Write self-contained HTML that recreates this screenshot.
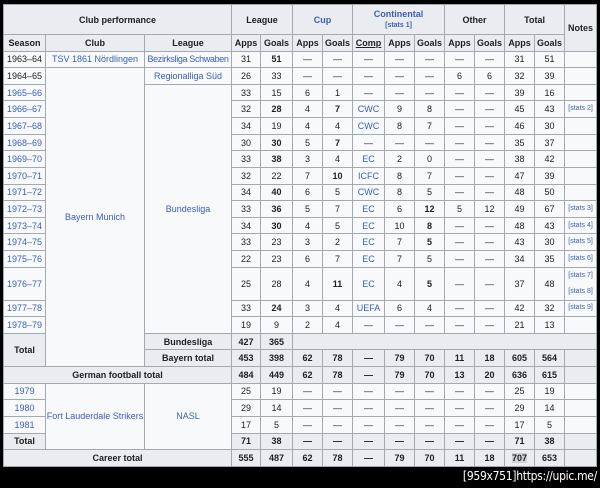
<!DOCTYPE html>
<html><head><meta charset="utf-8"><style>
html,body{margin:0;padding:0;background:#000;width:600px;height:488px;overflow:hidden}
table{position:absolute;left:3px;top:4px;width:593px;height:463px;border-collapse:collapse;table-layout:fixed;background:#f8f9fa;font-family:"Liberation Sans","DejaVu Sans",sans-serif;font-size:9px;color:#202122}
td,th{border:1px solid #a2a9b1;text-align:center;padding:0;line-height:10px;overflow:hidden;white-space:nowrap}
th{background:#eaecf0;font-weight:bold}
tr{height:16.6px}
a,.l{color:#3a5fb8}
.s{font-size:7px;color:#3a5fb8}
.h1{height:30px}
.d{height:33px}
.g{background:#d0d2d6}
abbr{text-decoration:underline;text-decoration-style:solid}
</style></head><body>
<table>
<colgroup><col style="width:42px"><col style="width:99px"><col style="width:87px"><col style="width:29px"><col style="width:32px"><col style="width:30px"><col style="width:30px"><col style="width:32px"><col style="width:30px"><col style="width:30px"><col style="width:30px"><col style="width:30px"><col style="width:30px"><col style="width:30px"><col style="width:32px"></colgroup>
<tr class="h1"><th colspan="3">Club performance</th><th colspan="2">League</th><th colspan="2" class="l">Cup</th><th colspan="3"><span class="l">Continental</span><br><span class="s">[stats 1]</span></th><th colspan="2">Other</th><th colspan="2">Total</th><th rowspan="2">Notes</th></tr>
<tr><th>Season</th><th>Club</th><th>League</th><th>Apps</th><th>Goals</th><th>Apps</th><th>Goals</th><th><abbr>Comp</abbr></th><th>Apps</th><th>Goals</th><th>Apps</th><th>Goals</th><th>Apps</th><th>Goals</th></tr>
<tr><td>1963–64</td><td class="l">TSV 1861 Nördlingen</td><td class="l" style="letter-spacing:-0.35px">Bezirksliga Schwaben</td><td>31</td><td><b>51</b></td><td>—</td><td>—</td><td>—</td><td>—</td><td>—</td><td>—</td><td>—</td><td>31</td><td>51</td><td></td></tr>
<tr><td>1964–65</td><td rowspan="17" class="l">Bayern Munich</td><td class="l">Regionalliga Süd</td><td>26</td><td>33</td><td>—</td><td>—</td><td>—</td><td>—</td><td>—</td><td>6</td><td>6</td><td>32</td><td>39</td><td></td></tr>
<tr><td class="l">1965–66</td><td rowspan="14" class="l">Bundesliga</td><td>33</td><td>15</td><td>6</td><td>1</td><td>—</td><td>—</td><td>—</td><td>—</td><td>—</td><td>39</td><td>16</td><td></td></tr>
<tr><td class="l">1966–67</td><td>32</td><td><b>28</b></td><td>4</td><td><b>7</b></td><td class="l">CWC</td><td>9</td><td>8</td><td>—</td><td>—</td><td>45</td><td>43</td><td class="s">[stats 2]</td></tr>
<tr><td class="l">1967–68</td><td>34</td><td>19</td><td>4</td><td>4</td><td class="l">CWC</td><td>8</td><td>7</td><td>—</td><td>—</td><td>46</td><td>30</td><td></td></tr>
<tr><td class="l">1968–69</td><td>30</td><td><b>30</b></td><td>5</td><td><b>7</b></td><td>—</td><td>—</td><td>—</td><td>—</td><td>—</td><td>35</td><td>37</td><td></td></tr>
<tr><td class="l">1969–70</td><td>33</td><td><b>38</b></td><td>3</td><td>4</td><td class="l">EC</td><td>2</td><td>0</td><td>—</td><td>—</td><td>38</td><td>42</td><td></td></tr>
<tr><td class="l">1970–71</td><td>32</td><td>22</td><td>7</td><td><b>10</b></td><td class="l">ICFC</td><td>8</td><td>7</td><td>—</td><td>—</td><td>47</td><td>39</td><td></td></tr>
<tr><td class="l">1971–72</td><td>34</td><td><b>40</b></td><td>6</td><td>5</td><td class="l">CWC</td><td>8</td><td>5</td><td>—</td><td>—</td><td>48</td><td>50</td><td></td></tr>
<tr><td class="l">1972–73</td><td>33</td><td><b>36</b></td><td>5</td><td>7</td><td class="l">EC</td><td>6</td><td><b>12</b></td><td>5</td><td>12</td><td>49</td><td>67</td><td class="s">[stats 3]</td></tr>
<tr><td class="l">1973–74</td><td>34</td><td><b>30</b></td><td>4</td><td>5</td><td class="l">EC</td><td>10</td><td><b>8</b></td><td>—</td><td>—</td><td>48</td><td>43</td><td class="s">[stats 4]</td></tr>
<tr><td class="l">1974–75</td><td>33</td><td>23</td><td>3</td><td>2</td><td class="l">EC</td><td>7</td><td><b>5</b></td><td>—</td><td>—</td><td>43</td><td>30</td><td class="s">[stats 5]</td></tr>
<tr><td class="l">1975–76</td><td>22</td><td>23</td><td>6</td><td>7</td><td class="l">EC</td><td>7</td><td>5</td><td>—</td><td>—</td><td>34</td><td>35</td><td class="s">[stats 6]</td></tr>
<tr class="d"><td class="l">1976–77</td><td>25</td><td>28</td><td>4</td><td><b>11</b></td><td class="l">EC</td><td>4</td><td><b>5</b></td><td>—</td><td>—</td><td>37</td><td>48</td><td class="s" style="line-height:16px">[stats 7]<br>[stats 8]</td></tr>
<tr><td class="l">1977–78</td><td>33</td><td><b>24</b></td><td>3</td><td>4</td><td class="l">UEFA</td><td>6</td><td>4</td><td>—</td><td>—</td><td>42</td><td>32</td><td class="s">[stats 9]</td></tr>
<tr><td class="l">1978–79</td><td>19</td><td>9</td><td>2</td><td>4</td><td>—</td><td>—</td><td>—</td><td>—</td><td>—</td><td>21</td><td>13</td><td></td></tr>
<tr><th rowspan="2">Total</th><th>Bundesliga</th><th>427</th><th>365</th><th colspan="11"></th></tr>
<tr><th>Bayern total</th><th>453</th><th>398</th><th>62</th><th>78</th><th>—</th><th>79</th><th>70</th><th>11</th><th>18</th><th>605</th><th>564</th><th></th></tr>
<tr><th colspan="3">German football total</th><th>484</th><th>449</th><th>62</th><th>78</th><th>—</th><th>79</th><th>70</th><th>13</th><th>20</th><th>636</th><th>615</th><th></th></tr>
<tr><td class="l">1979</td><td rowspan="4" class="l">Fort Lauderdale Strikers</td><td rowspan="4" class="l">NASL</td><td>25</td><td>19</td><td>—</td><td>—</td><td>—</td><td>—</td><td>—</td><td>—</td><td>—</td><td>25</td><td>19</td><td></td></tr>
<tr><td class="l">1980</td><td>29</td><td>14</td><td>—</td><td>—</td><td>—</td><td>—</td><td>—</td><td>—</td><td>—</td><td>29</td><td>14</td><td></td></tr>
<tr><td class="l">1981</td><td>17</td><td>5</td><td>—</td><td>—</td><td>—</td><td>—</td><td>—</td><td>—</td><td>—</td><td>17</td><td>5</td><td></td></tr>
<tr><th>Total</th><th>71</th><th>38</th><th>—</th><th>—</th><th>—</th><th>—</th><th>—</th><th>—</th><th>—</th><th>71</th><th>38</th><th></th></tr>
<tr><th colspan="3">Career total</th><th>555</th><th>487</th><th>62</th><th>78</th><th>—</th><th>79</th><th>70</th><th>11</th><th>18</th><th><span class="g">707</span></th><th>653</th><th></th></tr>
</table>
<div style="position:absolute;right:3px;top:469px;color:#fff;font-family:'DejaVu Sans Condensed','DejaVu Sans',sans-serif;font-size:12px;letter-spacing:-0.3px">[959x751]https://upic.me/</div>
</body></html>
